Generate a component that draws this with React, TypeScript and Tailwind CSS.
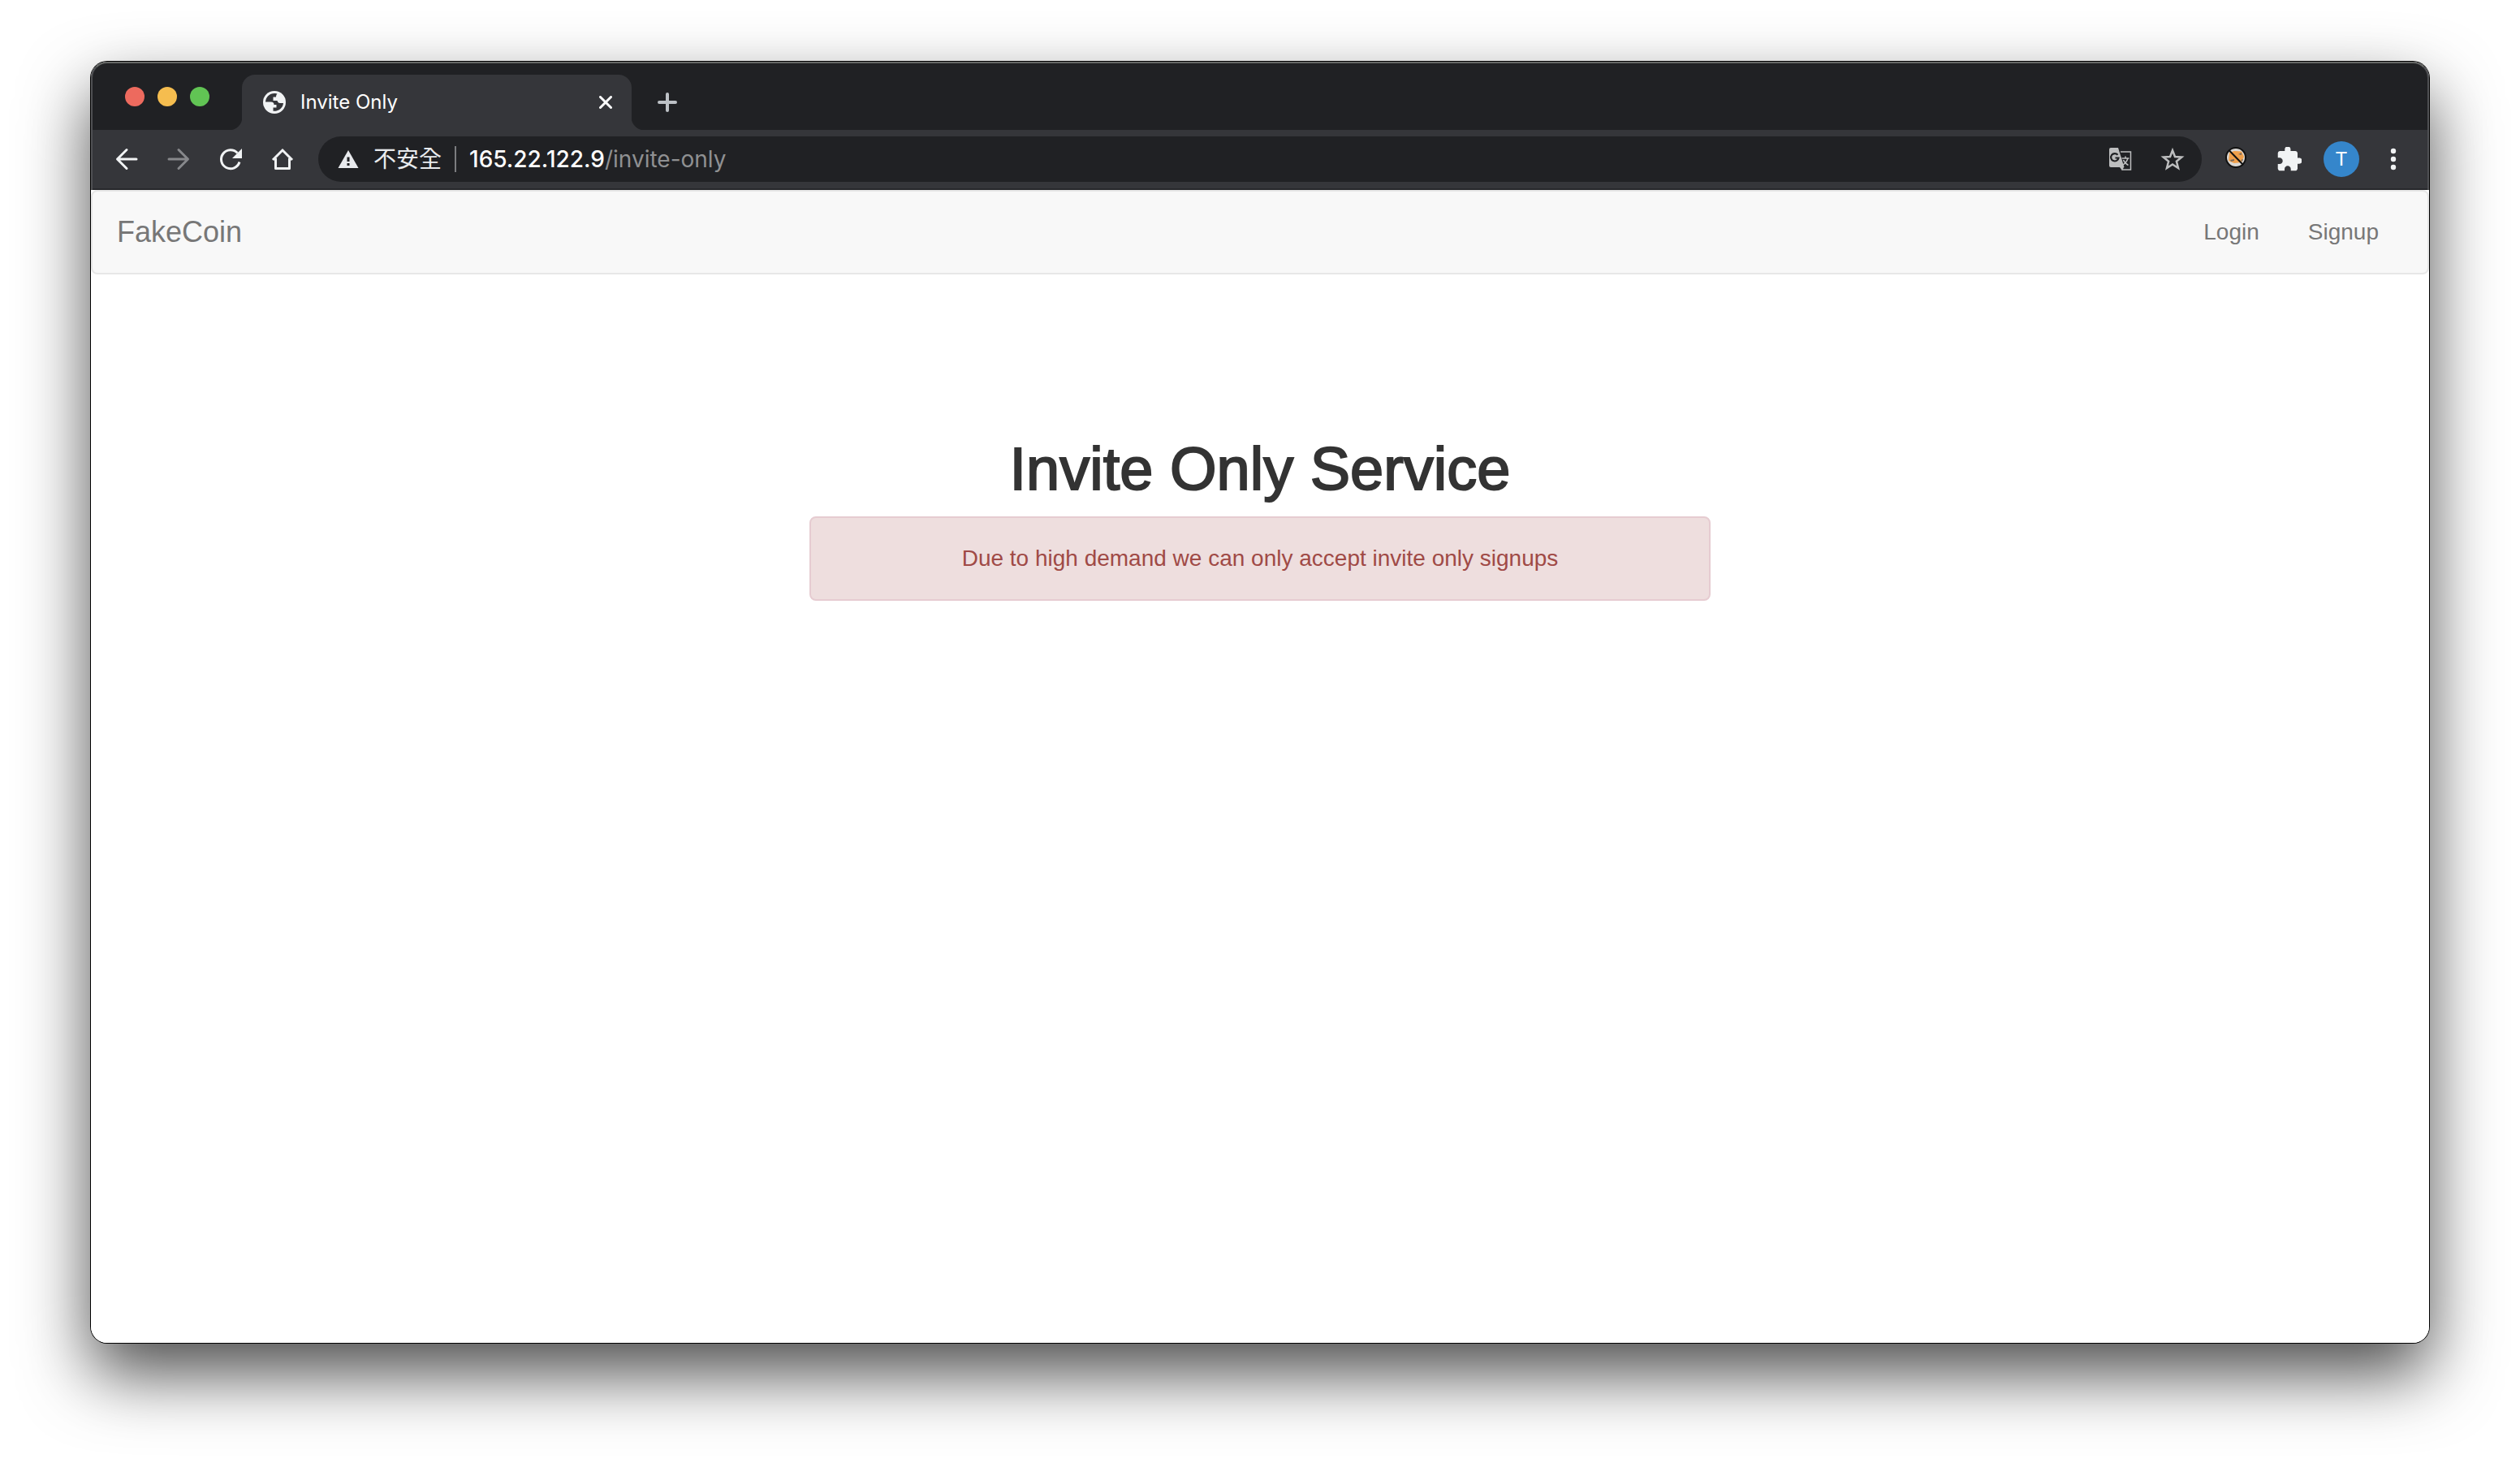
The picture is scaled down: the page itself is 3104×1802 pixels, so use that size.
import React from "react";

const iconButton = "flex size-16 items-center justify-center";

function BackIcon() {
  return (
    <svg viewBox="0 0 32 32" className="size-8" fill="none" stroke="#f1f3f4" strokeWidth="3" strokeLinecap="round" strokeLinejoin="round" aria-hidden="true">
      <path d="M28 16H5M16 4.5L4.5 16L16 27.500" />
    </svg>
  );
}

function ForwardIcon() {
  return (
    <svg viewBox="0 0 32 32" className="size-8" fill="none" stroke="#87888b" strokeWidth="3" strokeLinecap="round" strokeLinejoin="round" aria-hidden="true">
      <path d="M4 16H27M16 4.500L27.500 16L16 27.500" />
    </svg>
  );
}

function ReloadIcon() {
  return (
    <svg viewBox="0 0 32 32" className="size-8" aria-hidden="true">
      <path d="M27 19.500A11.500 11.500 0 1 1 24.500 8.500" fill="none" stroke="#f1f3f4" strokeWidth="3" />
      <path d="M30 3V15H18Z" fill="#f1f3f4" />
    </svg>
  );
}

function HomeIcon() {
  return (
    <svg viewBox="0 0 32 32" className="size-8" fill="none" stroke="#f1f3f4" strokeWidth="3" strokeLinejoin="round" aria-hidden="true">
      <path d="M7.500 15V27.500H24.500V15" />
      <path d="M4 17L16 5L28 17" strokeLinejoin="miter" />
    </svg>
  );
}

function GlobeIcon() {
  return (
    <svg viewBox="0 0 28 28" className="size-7 shrink-0" aria-hidden="true">
      <circle cx="14" cy="14" r="14" fill="#f1f3f4" />
      <path d="M15 3C8.500 2.500 3.500 7 3 13.500H9.500C12.500 13.500 13.500 15 13.500 17H16.500V20.500H12.500V24.800C19 25.500 24.500 21 25 15H21C18.500 15 18 13.500 17.500 12H12.500V7.500H16C16 5.500 16.500 4.500 17.500 3.500Z" fill="#35363a" />
    </svg>
  );
}

function WarningIcon() {
  return (
    <svg viewBox="0 0 26 22" className="h-[22px] w-[26px] shrink-0" aria-hidden="true">
      <path d="M13 0L25.500 22H0.500Z" fill="#e8eaed" />
      <path d="M11.500 8.500h3v5.500h-3zM11.500 16h3v3h-3z" fill="#202124" />
    </svg>
  );
}

function TranslateIcon() {
  return (
    <svg viewBox="0 0 28 28" className="size-7" aria-hidden="true">
      <path d="M14 5H26.500V27H15.500" fill="none" stroke="#bdbebf" strokeWidth="1.500" />
      <path d="M2 0H11L18.500 24H2A2 2 0 0 1 0 22V2A2 2 0 0 1 2 0Z" fill="#bdbebf" />
      <path d="M10.500 8.800A4.700 4.700 0 1 0 11.500 12.500H7.500" fill="none" stroke="#202124" strokeWidth="2.200" />
      <path d="M15.500 13H24.500M20 10.500V13M23 13Q21.500 18 16.500 21.500M17.500 15Q19 19 23.500 21.500" fill="none" stroke="#bdbebf" strokeWidth="1.500" />
      <path d="M13 24H18L16 28Z" fill="#bdbebf" />
    </svg>
  );
}

function StarIcon() {
  return (
    <svg viewBox="0 0 30 28" className="h-7 w-[30px]" fill="none" stroke="#bdbebf" strokeWidth="2.500" aria-hidden="true">
      <path d="M15 3.200L18 11L26.300 11.500L19.900 16.800L22 25L15 20.400L8 25L10.100 16.800L3.700 11.500L12 11Z" />
    </svg>
  );
}

function BlockedCookieIcon() {
  return (
    <svg viewBox="0 0 28 28" className="size-7" aria-hidden="true">
      <circle cx="14" cy="14" r="12" fill="#d9d7d4" stroke="#111" strokeWidth="2" />
      <path d="M6 8L12 6L21 6.500L24 13L21 20L12 21L5 18Z" fill="#f0a04b" />
      <path d="M7 17l5-1v2l-4 1zM17 10l4-2v3zM20 17l3-1-1 3z" fill="#77695c" />
      <path d="M6 5.500L23 23" stroke="#111" strokeWidth="2" />
    </svg>
  );
}

function PuzzleIcon() {
  return (
    <svg viewBox="1.500 1.500 21 21" className="size-[30px]" aria-hidden="true">
      <path fill="#f1f3f4" d="M20.500 11H19V7c0-1.100-.9-2-2-2h-4V3.500C13 2.120 11.880 1 10.500 1S8 2.120 8 3.500V5H4c-1.100 0-1.990.9-1.990 2v3.800H3.500c1.490 0 2.700 1.210 2.700 2.700s-1.210 2.700-2.700 2.700H2V20c0 1.100.9 2 2 2h3.800v-1.500c0-1.490 1.210-2.700 2.700-2.700 1.490 0 2.700 1.210 2.700 2.700V22H17c1.100 0 2-.9 2-2v-4h1.500c1.380 0 2.500-1.120 2.500-2.500S21.880 11 20.500 11z" />
    </svg>
  );
}

function TabStrip() {
  return (
    <div className="flex h-[84px] items-end bg-[#202124]">
      <div className="flex h-[82px] w-[186px] items-center gap-4 pl-[42px]">
        <button aria-label="Close window" className="size-6 rounded-full bg-[#ed6a5e]" />
        <button aria-label="Minimize window" className="size-6 rounded-full bg-[#f5bd4f]" />
        <button aria-label="Zoom window" className="size-6 rounded-full bg-[#61c454]" />
      </div>
      <div className="relative flex h-[68px] w-[480px] items-center rounded-t-2xl bg-[#35363a] pr-6 pl-[26px]">
        <span className="absolute bottom-0 -left-4 size-4 bg-[radial-gradient(circle_at_0_0,#202124_16px,#35363a_17px)]" />
        <span className="absolute -right-4 bottom-0 size-4 bg-[radial-gradient(circle_at_100%_0,#202124_16px,#35363a_17px)]" />
        <GlobeIcon />
        <span className="ml-[18px] flex-1 text-2xl leading-7 text-white">Invite Only</span>
        <button aria-label="Close tab" className="flex size-4 items-center justify-center">
          <svg viewBox="0 0 16 16" className="size-4" fill="none" stroke="#fff" strokeWidth="3" strokeLinecap="round" aria-hidden="true">
            <path d="M1.500 1.500L14.500 14.500M14.500 1.500L1.500 14.500" />
          </svg>
        </button>
      </div>
      <button aria-label="New tab" className="flex h-[68px] w-[88px] items-center justify-center">
        <svg viewBox="0 0 24 24" className="size-6" fill="none" stroke="#bdc1c6" strokeWidth="4" strokeLinecap="round" aria-hidden="true">
          <path d="M12 2V22M2 12H22" />
        </svg>
      </button>
    </div>
  );
}

function Toolbar() {
  return (
    <div className="flex h-[74px] items-center border-b-2 border-[#28292c] bg-[#35363a] px-3">
      <button aria-label="Back" className={iconButton}><BackIcon /></button>
      <button aria-label="Forward" className={iconButton}><ForwardIcon /></button>
      <button aria-label="Reload" className={iconButton}><ReloadIcon /></button>
      <button aria-label="Home" className={iconButton}><HomeIcon /></button>
      <div className="ml-3 flex h-14 flex-1 items-center rounded-full bg-[#202124] pr-1 pl-6 text-[28px] leading-8">
        <WarningIcon />
        <span className="ml-[18px] text-[#e8eaed]">不安全</span>
        <span className="mx-4 h-8 w-[2px] bg-[#7b7c7f]" />
        <label htmlFor="path" className="font-medium text-white">165.22.122.9</label>
        <input id="path" defaultValue="/invite-only" className="min-w-0 flex-1 bg-transparent text-[#8f9092] outline-none" />
        <button aria-label="Translate this page" className={iconButton}><TranslateIcon /></button>
        <button aria-label="Bookmark this page" className={iconButton}><StarIcon /></button>
      </div>
      <button aria-label="Cookie blocker" className="ml-2 flex h-16 w-[68px] items-center justify-center pb-1"><BlockedCookieIcon /></button>
      <button aria-label="Extensions" className={iconButton}><PuzzleIcon /></button>
      <button aria-label="Profile" className={iconButton}>
        <span className="flex size-11 items-center justify-center rounded-full bg-[#3586cb] font-['Roboto',sans-serif] text-2xl text-white">T</span>
      </button>
      <button aria-label="Menu" className={iconButton}>
        <svg viewBox="0 0 8 28" className="h-7 w-2" fill="#f1f3f4" aria-hidden="true">
          <circle cx="4" cy="4" r="3.200" />
          <circle cx="4" cy="14" r="3.200" />
          <circle cx="4" cy="24" r="3.200" />
        </svg>
      </button>
    </div>
  );
}

function SiteNav() {
  return (
    <nav className="flex h-[104px] items-center justify-between rounded-lg border-2 border-[#e7e7e7] bg-[#f8f8f8] px-[30px] text-[#777]">
      <a href="#home" className="text-4xl leading-10">FakeCoin</a>
      <div className="flex gap-[60px] pr-[30px] text-[28px] leading-10">
        <a href="#login">Login</a>
        <a href="#signup">Signup</a>
      </div>
    </nav>
  );
}

export default function App() {
  return (
    <div className="flex min-h-screen flex-col overflow-hidden bg-white px-28 pt-[76px] pb-[148px]">
      <div className="flex flex-1 flex-col rounded-[20px] shadow-[0_0_0_1px_#000,0_38px_84px_rgba(0,0,0,0.7)]">
        <div className="flex flex-1 flex-col overflow-hidden rounded-[20px] bg-white">
          <header className="relative font-['Inter','Noto_Sans_CJK_TC',sans-serif]">
            <TabStrip />
            <Toolbar />
            <span className="pointer-events-none absolute inset-0 rounded-t-[20px] border-x-2 border-t-2 border-x-[#505154] border-t-[#666866]" />
          </header>
          <div className="flex-1 font-['Liberation_Sans',Arial,sans-serif]">
            <SiteNav />
            <main className="mx-auto mt-[200px] max-w-[1110px] text-center">
              <h1 className="text-[74px] leading-[80px] font-medium text-[#333] [-webkit-text-stroke:2px_#333]">Invite Only Service</h1>
              <div role="alert" className="mt-[18px] rounded-lg border-2 border-[#e6ccd1] bg-[#eedede] p-[30px] text-[28px] leading-10 text-[#a04a46]">
                Due to high demand we can only accept invite only signups
              </div>
            </main>
          </div>
        </div>
      </div>
    </div>
  );
}
